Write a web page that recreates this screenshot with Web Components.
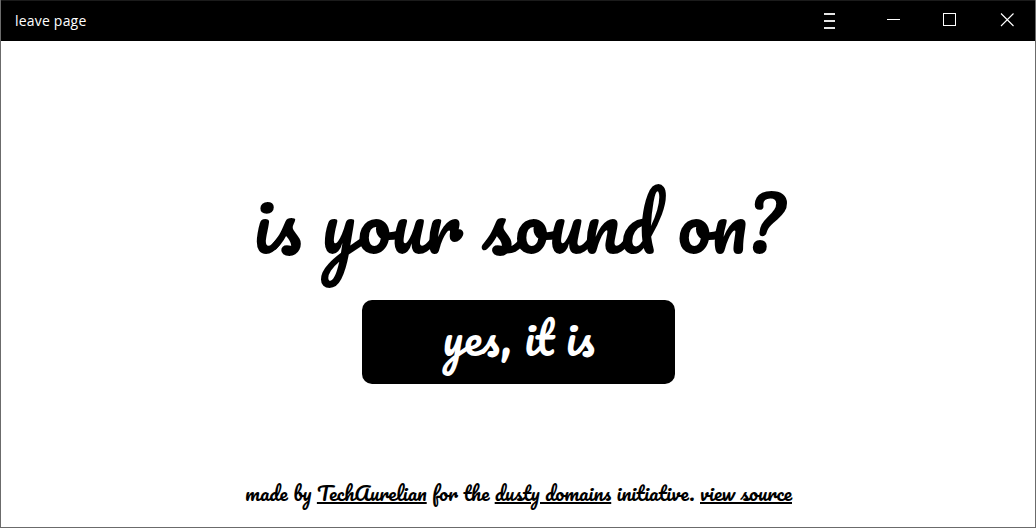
<!DOCTYPE html>
<html lang="en">
<head>
<meta charset="utf-8">
<title>is your sound on?</title>
<style>
html, body { margin: 0; height: 100%; overflow: hidden; background: #fff; }
</style>
</head>
<body>
<app-window></app-window>
<script>
customElements.define('title-bar', class extends HTMLElement {
  connectedCallback() {
    this.attachShadow({ mode: 'open' }).innerHTML = `<style>
      :host { display: flex; justify-content: space-between; box-sizing: border-box; height: 41px; flex: none;
        background: #000; color: #fff; border-top: 1px solid #1b1b1b; padding-left: 14px;
        font: 14px/40px "Segoe UI", "Open Sans", sans-serif; letter-spacing: 0.2px; }
      svg { display: block; width: 235px; height: 40px; }
    </style>
    <span><slot></slot></span>
    <svg viewBox="800 1 235 40" fill="none" stroke="#fff" shape-rendering="crispEdges" aria-hidden="true">
      <path stroke="#e5e5e5" stroke-width="2" d="M824 14h11M824 21h11M824 28h11"/>
      <path d="M887 19.5h13M943.5 13.5h12v12h-12z"/>
      <path shape-rendering="auto" stroke-width="1.1" d="M1001 13.5l12.5 12.5M1013.5 13.5L1001 26"/>
    </svg>`;
  }
});

customElements.define('answer-button', class extends HTMLElement {
  connectedCallback() {
    this.attachShadow({ mode: 'open' }).innerHTML = `<style>
      :host { display: block; }
      button { all: unset; box-sizing: border-box; display: flex; justify-content: center; align-items: center;
        width: 313px; height: 84px; padding: 0 0 11px 1px; border-radius: 10px; background: #000; color: #fff;
        font-size: 45px; line-height: 73px; }
    </style><button><slot></slot></button>`;
  }
});

customElements.define('page-credits', class extends HTMLElement {
  connectedCallback() {
    this.attachShadow({ mode: 'open' }).innerHTML = `<style>
      :host { display: block; font-size: 20px; line-height: 35px; white-space: nowrap; }
      a { color: inherit; text-decoration: underline; }
    </style>made by <a href="#">TechAurelian</a> for the <a href="#">dusty domains</a> initiative. <a href="#">view source</a>`;
  }
});

customElements.define('app-window', class extends HTMLElement {
  connectedCallback() {
    this.attachShadow({ mode: 'open' }).innerHTML = `<style>
      :host { display: flex; flex-direction: column; box-sizing: border-box; height: 100vh;
        border: solid #6b6b6b; border-width: 0 1px 1px; background: #fff; }
      main { display: flex; flex-direction: column; align-items: center; flex: 1; color: #000;
        font-family: Pacifico, cursive; }
      h1 { margin: 118px 0 0; padding-left: 1px; height: 141px; font-size: 75px; line-height: 126px; font-weight: 400; white-space: nowrap; }
      page-credits { margin-top: 91px; padding-left: 1px; }
    </style>
    <title-bar>leave page</title-bar>
    <main>
      <h1>is your sound on?</h1>
      <answer-button>yes, it is</answer-button>
      <page-credits></page-credits>
    </main>`;
  }
});
</script>
</body>
</html>
